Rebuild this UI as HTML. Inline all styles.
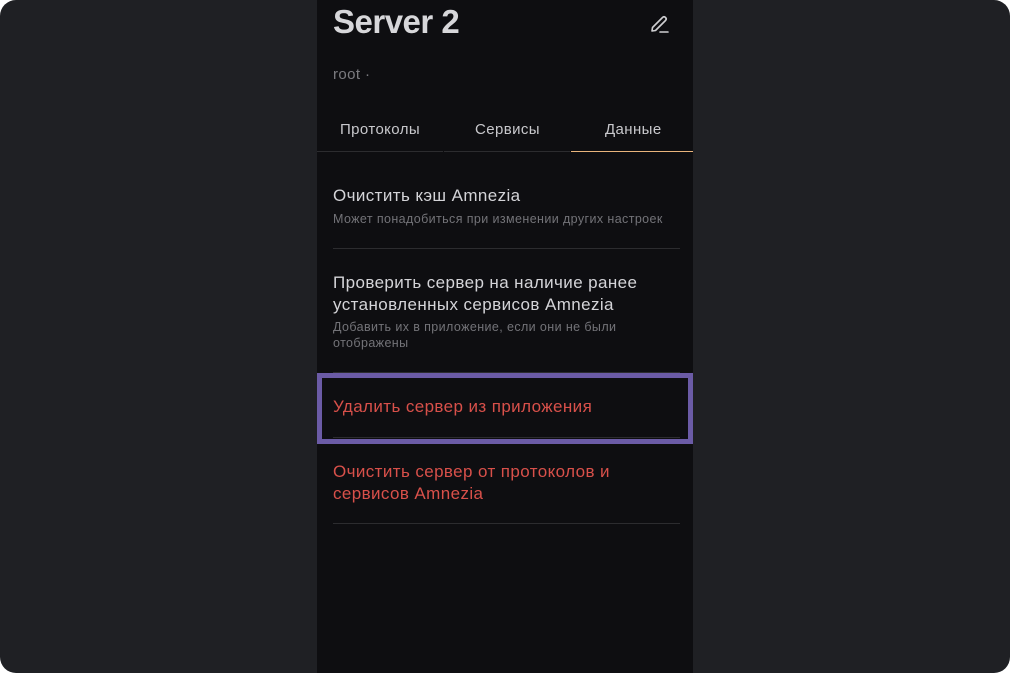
<!DOCTYPE html>
<html><head><meta charset="utf-8"><style>
html,body{margin:0;padding:0;background:#fff;}
body{width:1010px;height:673px;overflow:hidden;position:relative;font-family:"Liberation Sans","DejaVu Sans",sans-serif;}
.bg{position:absolute;left:0;top:0;width:1010px;height:673px;background:#1f2024;border-radius:16px;}
.panel{position:absolute;left:317px;top:0;width:376px;height:673px;background:#0e0e11;}
.t{position:absolute;white-space:nowrap;letter-spacing:0.4px;}
.line{position:absolute;height:1px;background:#2c2c2f;}
</style></head><body>
<div class="bg"></div>
<div class="panel">
 <div class="t" style="left:16px;top:3px;font-size:33px;font-weight:bold;color:#d7d7da;letter-spacing:-0.5px;">Server 2</div>
 <svg style="position:absolute;left:330px;top:11px" width="26" height="26" viewBox="0 0 26 26" fill="none" stroke="#cfcfd2" stroke-width="1.6" stroke-linecap="round" stroke-linejoin="round">
  <path d="M5 20 L5.5 16.5 L15.5 6.5 Q17 5 18.5 6.5 Q20 8 18.5 9.5 L8.5 19.5 Z"/>
  <path d="M13 21 H21"/>
 </svg>
 <div class="t" style="left:16px;top:66px;font-size:15px;color:#7b7b80;">root ·</div>
 <div class="t" style="left:23px;top:121px;font-size:15px;color:#c8c8cc;">Протоколы</div>
 <div class="t" style="left:158px;top:121px;font-size:15px;color:#c8c8cc;">Сервисы</div>
 <div class="t" style="left:288px;top:121px;font-size:15px;color:#c8c8cc;">Данные</div>
 <div class="line" style="left:0;top:151px;width:126px;background:#2c2c2f"></div>
 <div class="line" style="left:127px;top:151px;width:126px;background:#2c2c2f"></div>
 <div class="line" style="left:254px;top:151px;width:122px;background:#e9b47c"></div>

 <div class="t" style="left:16px;top:186px;font-size:17px;color:#d4d4d8;">Очистить кэш Amnezia</div>
 <div class="t" style="left:16px;top:212px;font-size:12.5px;color:#737378;">Может понадобиться при изменении других настроек</div>
 <div class="line" style="left:16px;top:248px;width:347px;"></div>

 <div class="t" style="left:16px;top:272px;font-size:17px;color:#d4d4d8;line-height:22px;">Проверить сервер на наличие ранее<br>установленных сервисов Amnezia</div>
 <div class="t" style="left:16px;top:319px;font-size:12.5px;color:#737378;line-height:16px;">Добавить их в приложение, если они не были<br>отображены</div>
 <div class="line" style="left:16px;top:372px;width:347px;"></div>

 <div style="position:absolute;left:0;top:373px;width:366px;height:61px;border:5px solid #6b5ba6;box-sizing:content-box;"></div>
 <div class="t" style="left:16px;top:397px;font-size:17px;color:#d8504a;">Удалить сервер из приложения</div>
 <div class="line" style="left:16px;top:437px;width:347px;"></div>

 <div class="t" style="left:16px;top:461px;font-size:17px;color:#d8504a;line-height:22px;">Очистить сервер от протоколов и<br>сервисов Amnezia</div>
 <div class="line" style="left:16px;top:523px;width:347px;"></div>
</div>
</body></html>
